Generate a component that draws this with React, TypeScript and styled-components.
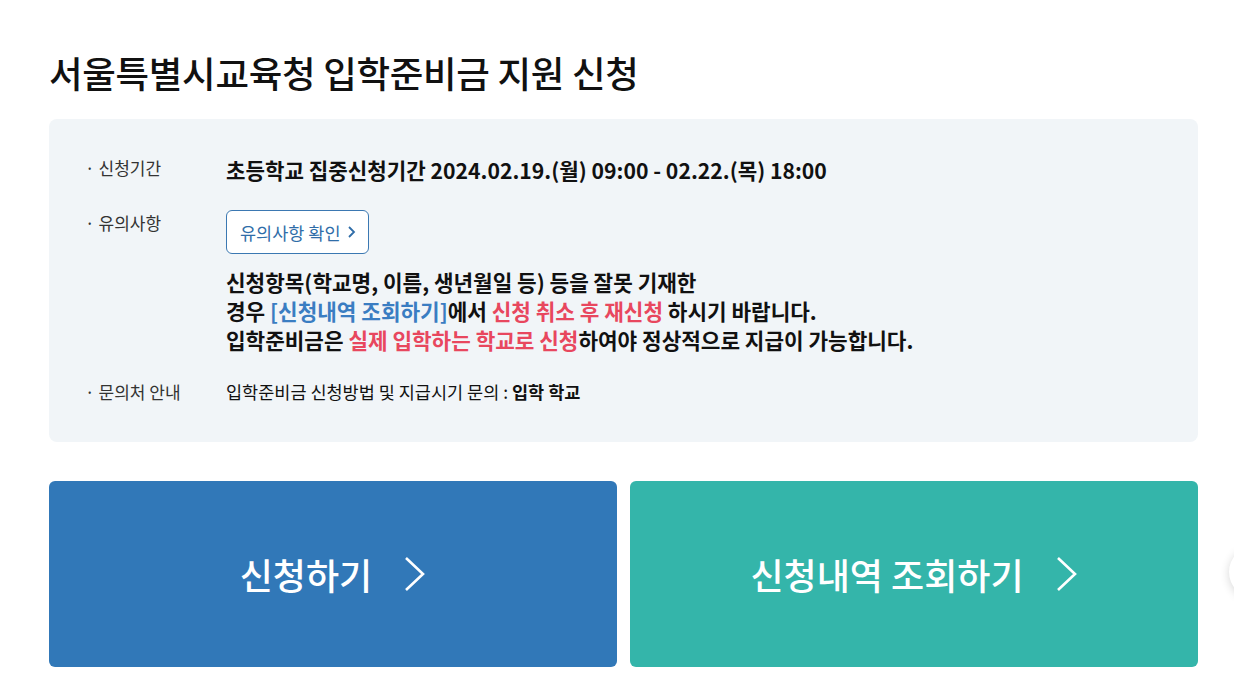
import * as React from "react";
import styled, { createGlobalStyle } from "styled-components";

const GlobalStyle = createGlobalStyle`
  html, body {
    margin: 0;
    padding: 0;
    background: #ffffff;
    overflow-x: hidden;
  }
  body {
    font-family: "Noto Sans CJK KR", "Noto Sans", sans-serif;
    color: #111111;
  }
`;

const Page = styled.main`
  width: 1149px;
  margin-left: 49px;
  padding-top: 48px;
`;

const Title = styled.h1`
  margin: 0 0 22px;
  font-size: 36.5px;
  line-height: 49px;
  font-weight: 500;
  letter-spacing: -0.3px;
  color: #111111;
`;

const InfoBox = styled.section`
  background: #f1f5f8;
  border-radius: 8px;
  padding: 36px 36px 37px;
  display: grid;
  grid-template-columns: 141px 1fr;
  row-gap: 25px;
`;

const Label = styled.div`
  font-size: 17px;
  line-height: 26px;
  color: #333333;
  display: flex;
  gap: 4px;

  &::before {
    content: "·";
  }
`;

const Value = styled.div<{ $size?: number; $bold?: boolean }>`
  font-size: ${(p) => p.$size ?? 17.5}px;
  font-weight: ${(p) => (p.$bold ? 700 : 400)};
  line-height: ${(p) => ((p.$size ?? 17.5) > 19 ? "30px" : "26px")};
  color: #111111;
`;

const NoticeButton = styled.button`
  display: inline-flex;
  align-items: center;
  gap: 6px;
  height: 44px;
  padding: 0 12px 0 13px;
  border: 1px solid #3b78b2;
  border-radius: 6px;
  background: #ffffff;
  color: #2f6da8;
  font-family: inherit;
  font-size: 17.5px;
  cursor: pointer;
  margin-bottom: 13px;
`;

const Lines = styled.p`
  margin: 0;
  font-size: 21.3px;
  line-height: 29px;
  font-weight: 700;
  color: #111111;
`;

const Blue = styled.span`
  color: #3a7dc2;
`;

const Red = styled.span`
  color: #e8475e;
`;

const Strong = styled.b`
  font-weight: 700;
`;

const ButtonRow = styled.div`
  margin-top: 39px;
  display: grid;
  grid-template-columns: 568px 568px;
  column-gap: 13px;
`;

const BigButton = styled.button<{ $color: string }>`
  height: 186px;
  border: 0;
  border-radius: 6px;
  background: ${(p) => p.$color};
  color: #ffffff;
  font-family: inherit;
  font-size: 36px;
  font-weight: 500;
  display: flex;
  align-items: center;
  justify-content: center;
  gap: 32px;
  cursor: pointer;
`;

const FloatingCircle = styled.div`
  position: fixed;
  left: 1229px;
  top: 546px;
  width: 52px;
  height: 52px;
  border-radius: 50%;
  background: #ffffff;
  box-shadow: 0 2px 10px rgba(0, 0, 0, 0.16);
`;

const SmallChevron = () => (
  <svg width="9" height="14" viewBox="0 0 9 14" fill="none">
    <path d="M2 2l5 5-5 5" stroke="currentColor" strokeWidth="1.8" />
  </svg>
);

const BigChevron = () => (
  <svg width="22" height="36" viewBox="0 0 22 36" fill="none">
    <path d="M2 2l17 16L2 34" stroke="currentColor" strokeWidth="2.6" />
  </svg>
);

const App: React.FunctionComponent<{}> = () => {
  return (
    <>
      <GlobalStyle />
      <Page>
        <Title>서울특별시교육청 입학준비금 지원 신청</Title>
        <InfoBox>
          <Label>신청기간</Label>
          <Value $size={21.2} $bold>
            초등학교 집중신청기간 2024.02.19.(월) 09:00 - 02.22.(목) 18:00
          </Value>

          <Label>유의사항</Label>
          <div>
            <NoticeButton>
              유의사항 확인 <SmallChevron />
            </NoticeButton>
            <Lines>
              신청항목(학교명, 이름, 생년월일 등) 등을 잘못 기재한
              <br />
              경우 <Blue>[신청내역 조회하기]</Blue>에서 <Red>신청 취소 후 재신청</Red> 하시기 바랍니다.
              <br />
              입학준비금은 <Red>실제 입학하는 학교로 신청</Red>하여야 정상적으로 지급이 가능합니다.
            </Lines>
          </div>

          <Label>문의처 안내</Label>
          <Value>
            입학준비금 신청방법 및 지급시기 문의 : <Strong>입학 학교</Strong>
          </Value>
        </InfoBox>
        <ButtonRow>
          <BigButton $color="#3178b8">
            신청하기 <BigChevron />
          </BigButton>
          <BigButton $color="#34b5aa">
            신청내역 조회하기 <BigChevron />
          </BigButton>
        </ButtonRow>
      </Page>
      <FloatingCircle />
    </>
  );
};

export default App;
